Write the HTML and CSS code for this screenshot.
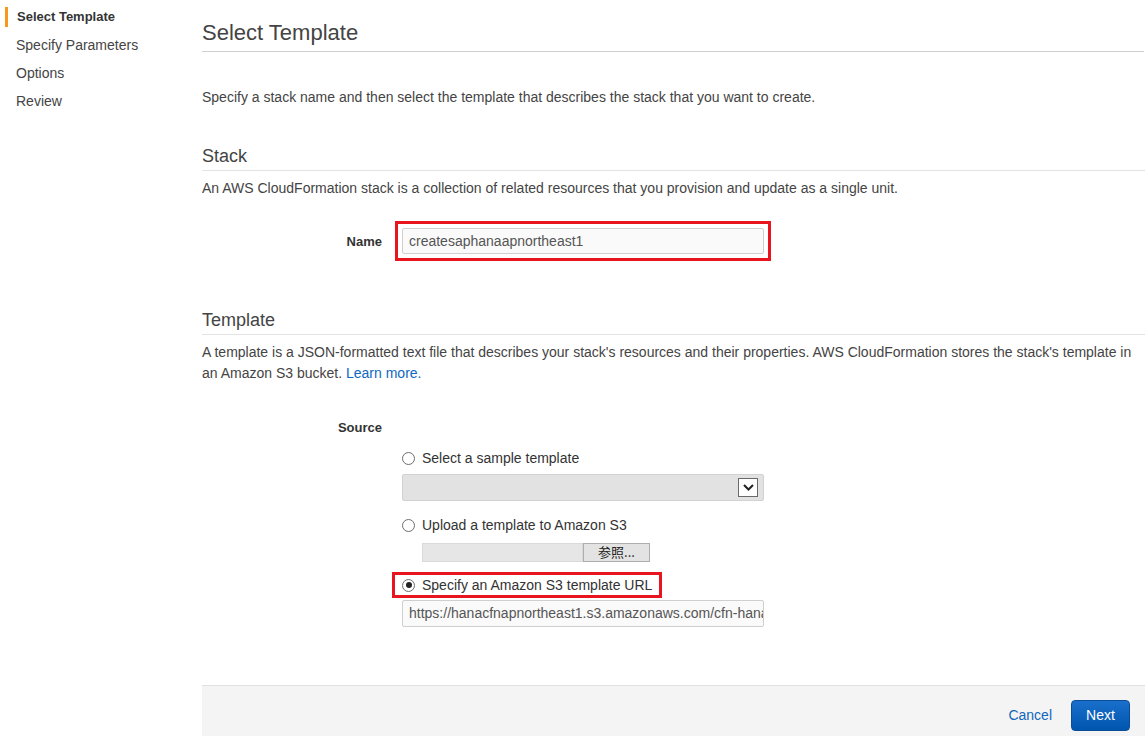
FILE: index.html
```html
<!DOCTYPE html>
<html>
<head>
<meta charset="utf-8">
<link rel="stylesheet" href="styles.css">
</head>
<body>
<div class="page">
  <nav class="steps">
    <div class="step active">Select Template</div>
    <div class="step">Specify Parameters</div>
    <div class="step">Options</div>
    <div class="step">Review</div>
  </nav>
  <main class="main">
    <h1 class="title">Select Template</h1>
    <p class="intro">Specify a stack name and then select the template that describes the stack that you want to create.</p>

    <h2 class="section stack-h">Stack</h2>
    <p class="desc">An AWS CloudFormation stack is a collection of related resources that you provision and update as a single unit.</p>

    <div class="row name-row">
      <div class="label">Name</div>
      <div class="ctrl">
        <div class="hl-input"><div class="input">createsaphanaapnortheast1</div></div>
      </div>
    </div>

    <h2 class="section tpl-h">Template</h2>
    <p class="desc tpl-desc">A template is a JSON-formatted text file that describes your stack's resources and their properties. AWS CloudFormation stores the stack's template in an Amazon S3 bucket. <a class="link">Learn more.</a></p>

    <div class="row source-row">
      <div class="label">Source</div>
      <div class="ctrl source-ctrl">
        <div class="radio-row r1"><span class="radio"></span>Select a sample template</div>
        <div class="select"><span class="sel-btn"><svg width="11" height="7" viewBox="0 0 11 7"><path d="M1 1 L5.5 5.5 L10 1" fill="none" stroke="#222" stroke-width="2"/></svg></span></div>
        <div class="radio-row r2"><span class="radio"></span>Upload a template to Amazon S3</div>
        <div class="file"><span class="file-field"></span><span class="file-btn">参照...</span></div>
        <div class="radio-row r3"><span class="radio checked"></span>Specify an Amazon S3 template URL</div>
        <div class="input url">https://hanacfnapnortheast1.s3.amazonaws.com/cfn-hana-3node.template</div>
      </div>
    </div>

    <footer class="footer">
      <a class="cancel">Cancel</a>
      <span class="next">Next</span>
    </footer>
  </main>
</div>
</body>
</html>
```

FILE: styles.css
```css
html, body {
  margin: 0;
  padding: 0;
  background: #fff;
}
body {
  font-family: "Liberation Sans", Arial, sans-serif;
  font-size: 14px;
  color: #444;
}
.page {
  display: flex;
  height: 736px;
  overflow: hidden;
}
.steps {
  width: 202px;
  flex: none;
  padding-top: 7px;
  display: flex;
  flex-direction: column;
  gap: 8px;
}
.step {
  line-height: 20px;
  padding-left: 16px;
  color: #444;
}
.step.active {
  margin-left: 5px;
  border-left: 3px solid #f7981d;
  padding-left: 9px;
  font-weight: bold;
  font-size: 13px;
  color: #333;
}
.main {
  flex: 1;
  display: flex;
  flex-direction: column;
  min-width: 0;
}
.title {
  margin: 0;
  padding-top: 20px;
  padding-bottom: 5px;
  font-size: 22px;
  line-height: 26px;
  font-weight: normal;
  color: #444;
  border-bottom: 1px solid #cfcfcf;
  margin-right: 1px;
}
.intro {
  margin: 35px 0 0;
  line-height: 20px;
}
.section {
  margin: 0;
  font-size: 18px;
  line-height: 22px;
  font-weight: normal;
  color: #444;
  padding-bottom: 3px;
  border-bottom: 1px solid #e3e3e3;
}
.stack-h { margin-top: 38px; }
.desc {
  margin: 7px 0 0;
  line-height: 20px;
}
.tpl-h { margin-top: 55px; }
.tpl-desc { line-height: 21px; margin-top: 7px; padding-right: 8px; }
.link { color: #0f68c2; text-decoration: none; }
.row {
  display: grid;
  grid-template-columns: 180px 362px;
  column-gap: 20px;
}
.label {
  text-align: right;
  font-weight: bold;
  font-size: 13px;
  color: #333;
  line-height: 20px;
}
.name-row { margin-top: 30px; align-items: center; }
.name-row .label { padding-top: 1px; }
.hl-input {
  outline: 3px solid #e8141e;
  outline-offset: 4px;
}
.input {
  box-sizing: border-box;
  height: 26px;
  border: 1px solid #cfcfcf;
  border-radius: 2px;
  background: #fafafa;
  color: #555;
  line-height: 24px;
  padding-left: 6px;
  white-space: nowrap;
  overflow: hidden;
}
.source-row { margin-top: 34px; }
.source-ctrl {
  padding-top: 30px;
  display: flex;
  flex-direction: column;
  align-items: flex-start;
}
.radio-row {
  display: flex;
  align-items: center;
  line-height: 20px;
  color: #333;
  white-space: nowrap;
}
.radio {
  box-sizing: border-box;
  width: 13px;
  height: 13px;
  border: 1px solid #6d6d6d;
  border-radius: 50%;
  background: #fff;
  margin-right: 7px;
  position: relative;
}
.radio.checked::after {
  content: "";
  position: absolute;
  left: 2.5px;
  top: 2.5px;
  width: 6px;
  height: 6px;
  border-radius: 50%;
  background: #222;
}
.select {
  box-sizing: border-box;
  margin-top: 6px;
  width: 362px;
  height: 27px;
  border: 1px solid #d2d2d2;
  border-radius: 2px;
  background: #e2e2e2;
  display: flex;
  justify-content: flex-end;
  align-items: center;
  padding-right: 5px;
}
.sel-btn {
  box-sizing: border-box;
  width: 20px;
  height: 19px;
  border: 1px solid #6a6a6a;
  background: #fff;
  display: flex;
  align-items: center;
  justify-content: center;
}
.r2 { margin-top: 14px; }
.file {
  margin-top: 8px;
  margin-left: 20px;
  display: flex;
  height: 19px;
}
.file-field {
  box-sizing: border-box;
  width: 161px;
  height: 19px;
  background: #e6e6e6;
  border: 1px solid #dadada;
}
.file-btn {
  box-sizing: border-box;
  width: 67px;
  height: 19px;
  background: #e3e3e3;
  border: 1px solid #adadad;
  font-family: "Noto Sans CJK JP", "Liberation Sans", sans-serif;
  font-size: 13px;
  line-height: 16px;
  text-align: center;
  color: #222;
}
.r3 {
  margin-top: 10px;
  margin-left: -10px;
  border: 3px solid #e8141e;
  padding: 0 7px 0 7px;
}
.url {
  margin-top: 2px;
  width: 362px;
  height: 27px;
  line-height: 25px;
}
.footer {
  margin-top: 58px;
  flex: 1;
  background: #f4f4f4;
  border-top: 1px solid #e1e1e1;
  display: flex;
  justify-content: flex-end;
  align-items: flex-start;
  padding-top: 14px;
  padding-right: 15px;
  gap: 19px;
}
.cancel {
  color: #1166bb;
  line-height: 31px;
}
.next {
  box-sizing: border-box;
  width: 59px;
  height: 31px;
  border: 1px solid #0a4d96;
  border-radius: 4px;
  background: linear-gradient(#1a6fcc, #0055ad);
  color: #fff;
  line-height: 29px;
  text-align: center;
}
```
